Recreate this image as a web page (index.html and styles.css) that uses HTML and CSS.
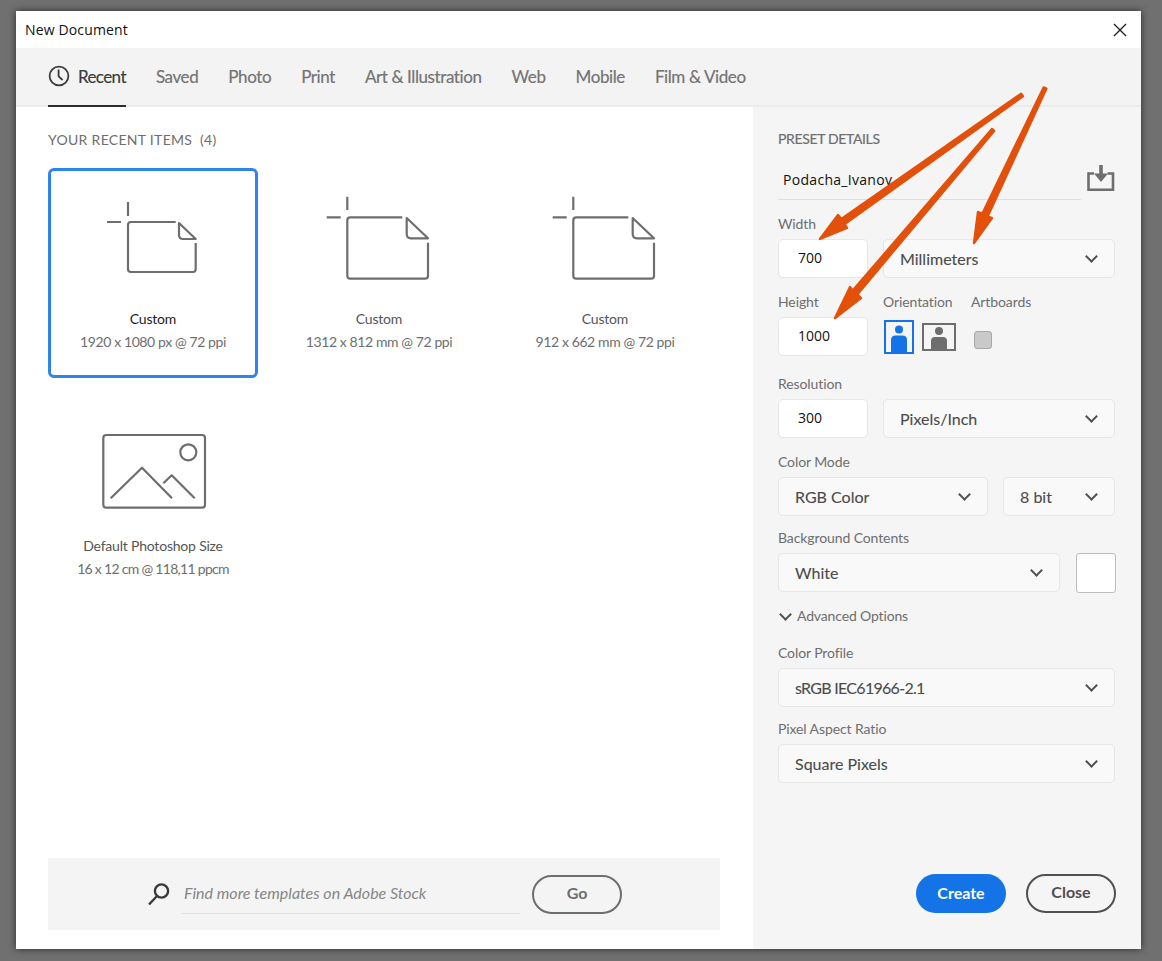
FILE: index.html
```html
<!DOCTYPE html>
<html lang="en">
<head>
	<meta charset="UTF-8">
	<title>New Document</title>
	<link rel="stylesheet" href="styles.css">
</head>
<body>
	<div class="dialog">
		<div class="title-bar">
			<span>New Document</span>
			<svg class="close-x" width="14" height="14" viewBox="0 0 14 14"><path d="M1 1L13 13M13 1L1 13"/></svg>
		</div>
		<div class="tabs">
			<a class="tab tab-active">
				<svg class="clock" width="22" height="22" viewBox="0 0 22 22"><circle cx="11" cy="11" r="9.4"/><path d="M10.6 4.6V11.4L14.6 15"/></svg>
				Recent
			</a>
			<a class="tab">Saved</a>
			<a class="tab">Photo</a>
			<a class="tab">Print</a>
			<a class="tab">Art &amp; Illustration</a>
			<a class="tab">Web</a>
			<a class="tab">Mobile</a>
			<a class="tab">Film &amp; Video</a>
		</div>
		<div class="content">
			<!-- left side -->
			<div class="recent">
				<div class="recent-title">YOUR RECENT ITEMS&nbsp; (4)</div>
				<div class="recent-grid">
					<div class="card card-selected">
						<div class="card-icon">
							<svg class="doc-icon" width="110" height="90" viewBox="0 0 110 90">
								<path d="M30 10V24M9 30H23"/>
								<path d="M77.7 30H33Q30 30 30 33V77Q30 80 33 80H95Q97.7 80 97.7 77V51"/>
								<path d="M81 31L97.7 47H85Q81 47 81 43Z"/>
							</svg>
						</div>
						<div class="card-name">Custom</div>
						<div class="card-size">1920 x 1080 px @ 72 ppi</div>
					</div>
					<div class="card">
						<div class="card-icon">
							<svg class="doc-icon" width="110" height="90" viewBox="0 0 110 90">
								<path d="M23.3 4.7V18M2.7 25.3H16.7"/>
								<path d="M78.3 25.3H26.3Q23.3 25.3 23.3 28.3V83.7Q23.3 86.7 26.3 86.7H101Q104 86.7 104 83.7V50.7"/>
								<path d="M82.7 26L104 46.3H87Q82.7 46.3 82.7 42Z"/>
							</svg>
						</div>
						<div class="card-name">Custom</div>
						<div class="card-size">1312 x 812 mm @ 72 ppi</div>
					</div>
					<div class="card">
						<div class="card-icon">
							<svg class="doc-icon" width="110" height="90" viewBox="0 0 110 90">
								<path d="M23.3 4.7V18M2.7 25.3H16.7"/>
								<path d="M78.3 25.3H26.3Q23.3 25.3 23.3 28.3V83.7Q23.3 86.7 26.3 86.7H101Q104 86.7 104 83.7V50.7"/>
								<path d="M82.7 26L104 46.3H87Q82.7 46.3 82.7 42Z"/>
							</svg>
						</div>
						<div class="card-name">Custom</div>
						<div class="card-size">912 x 662 mm @ 72 ppi</div>
					</div>
					<div class="card">
						<div class="card-icon">
							<svg class="doc-icon" width="110" height="90" viewBox="0 0 110 90">
								<rect x="5.3" y="16" width="101.7" height="72.7" rx="3"/>
								<circle cx="90.3" cy="33.3" r="8"/>
								<path d="M12.7 79.3L44 48.7L74 79.3M65.3 64.3L73.7 56.3L96.7 79.3"/>
							</svg>
						</div>
						<div class="card-name">Default Photoshop Size</div>
						<div class="card-size card-size-narrow">16 x 12 cm @ 118,11 ppcm</div>
					</div>
				</div>
				<div class="search-bar">
					<svg class="search-icon" width="24" height="24" viewBox="0 0 24 24"><circle cx="14.5" cy="9" r="6.6"/><path d="M10 14L2 22.5"/></svg>
					<div class="search-input">Find more templates on Adobe Stock</div>
					<a class="btn btn-outline btn-go">Go</a>
				</div>
			</div>
			<!-- right side -->
			<div class="details">
				<div class="details-title">PRESET DETAILS</div>
				<div class="name-row">
					<div class="name-input">Podacha_Ivanov</div>
					<svg class="save-icon" width="28" height="27" viewBox="0 0 28 27">
						<path class="save-tray" d="M7 8.5H1.5V24.8H26V8.5H20.5"/>
						<path class="save-arrow" d="M12.2 0H15.8V8.5H21L14 17L7 8.5H12.2Z"/>
					</svg>
				</div>

				<div class="field field-width">
					<label>Width</label>
					<div class="field-row">
						<div class="num-input">700</div>
						<div class="select select-grow">Millimeters<i class="chevron"></i></div>
					</div>
				</div>

				<div class="orient-grid">
					<label>Height</label>
					<label>Orientation</label>
					<label>Artboards</label>
					<div class="num-input">1000</div>
					<div class="orient-btns">
						<svg class="portrait" width="30" height="34" viewBox="0 0 30 34">
							<rect x="1" y="1" width="28" height="32"/>
							<circle cx="15" cy="9.5" r="4"/>
							<path d="M7 33V20Q7 15.5 11.5 15.5H18.5Q23 15.5 23 20V33Z"/>
						</svg>
						<svg class="landscape" width="34" height="28" viewBox="0 0 34 28">
							<rect x="1" y="1" width="32" height="26"/>
							<circle cx="17" cy="8" r="4"/>
							<path d="M9 27V18Q9 14 13 14H21Q25 14 25 18V27Z"/>
						</svg>
					</div>
					<div class="checkbox"></div>
				</div>

				<div class="field field-res">
					<label>Resolution</label>
					<div class="field-row">
						<div class="num-input">300</div>
						<div class="select select-grow">Pixels/Inch<i class="chevron"></i></div>
					</div>
				</div>

				<div class="field">
					<label>Color Mode</label>
					<div class="field-row">
						<div class="select select-grow">RGB Color<i class="chevron"></i></div>
						<div class="select select-bit">8 bit<i class="chevron"></i></div>
					</div>
				</div>

				<div class="field field-tight">
					<label>Background Contents</label>
					<div class="field-row field-row-wide">
						<div class="select select-grow">White<i class="chevron"></i></div>
						<div class="swatch"></div>
					</div>
				</div>

				<div class="advanced"><i class="chevron chevron-small"></i>Advanced Options</div>

				<div class="field field-profile">
					<label>Color Profile</label>
					<div class="select select-narrow">sRGB IEC61966-2.1<i class="chevron"></i></div>
				</div>

				<div class="field field-tight">
					<label>Pixel Aspect Ratio</label>
					<div class="select">Square Pixels<i class="chevron"></i></div>
				</div>

				<div class="actions">
					<a class="btn btn-primary">Create</a>
					<a class="btn btn-outline btn-close">Close</a>
				</div>
			</div>
		</div>
	</div>

	<!-- arrows drawn over the screenshot -->
	<svg class="arrows" width="1162" height="961" viewBox="0 0 1162 961">
		<polygon points="820,239 838,215 841.3,219 1021.1,93.8 1022.9,96.2 844.7,224 847,228"/>
		<polygon points="974,243 978,212 982.3,213.7 1043.6,87.4 1046.4,88.6 987.7,216.3 992,218"/>
		<polygon points="835,318 850,287 852.7,290.6 991.9,129 994.1,131 857.3,294.4 861,298"/>
	</svg>
</body>
</html>
```

FILE: styles.css
```css
html, body {
	margin: 0;
	padding: 0;
	height: 961px;
	overflow: hidden;
}
body {
	background-color: #707070;
	padding: 11px 21px 12px 16px;
	box-sizing: border-box;
	position: relative;
	font-family: "Lato", "Noto Sans", sans-serif;
	color: #6e6e6e;
}
a {
	text-decoration: none;
}
label {
	display: block;
	height: 20px;
	line-height: 20px;
	font-size: 14px;
	letter-spacing: -0.1px;
	color: #6e6e6e;
	margin-bottom: 5px;
}
.dialog {
	height: 938px;
	background-color: #fff;
	box-shadow: 0 0 7px #2a2a2a;
	display: flex;
	flex-direction: column;
}
.title-bar {
	height: 37px;
	display: flex;
	align-items: center;
	justify-content: space-between;
	padding: 0 14px 0 9px;
	font-family: "Open Sans", sans-serif;
	font-size: 14px;
	letter-spacing: 0.15px;
	color: #111;
}
.close-x path {
	stroke: #222;
	stroke-width: 1.4;
	fill: none;
}
.tabs {
	height: 57px;
	background-color: #f3f3f3;
	border-bottom: 2px solid #ebebeb;
	padding-left: 32px;
	display: flex;
	gap: 30px;
}
.tab {
	display: flex;
	align-items: center;
	gap: 8px;
	height: 57px;
	padding-bottom: 1px;
	box-sizing: border-box;
	font-size: 17px;
	letter-spacing: -0.4px;
	-webkit-text-stroke: 0.2px;
	color: #747474;
}
.tab-active {
	color: #3c3c3c;
	border-bottom: 2px solid #2c2c2c;
	height: 59px;
	letter-spacing: -0.6px;
}
.clock {
	fill: none;
	stroke: #3c3c3c;
	stroke-width: 1.8;
}
.content {
	flex: 1;
	display: flex;
	min-height: 0;
}

/* left side */
.recent {
	width: 737px;
	box-sizing: border-box;
	padding: 22px 33px 19px 32px;
	display: flex;
	flex-direction: column;
}
.recent-title {
	height: 22px;
	line-height: 22px;
	font-size: 14px;
	letter-spacing: 0.3px;
	color: #6e6e6e;
}
.recent-grid {
	margin-top: 17px;
	display: grid;
	grid-template-columns: repeat(3, 210px);
	grid-template-rows: 210px 210px;
	column-gap: 16px;
	row-gap: 17px;
}
.card {
	border-radius: 6px;
	box-sizing: border-box;
	text-align: center;
	border: 3px solid transparent;
}
.card-selected {
	border-color: #2d84ee;
}
.card-icon {
	height: 132px;
	display: flex;
	align-items: center;
	justify-content: center;
}
.doc-icon {
	fill: none;
	stroke: #6e6e6e;
	stroke-width: 2.2;
	stroke-linejoin: round;
}
.card-name {
	margin-top: 5px;
	height: 22px;
	line-height: 22px;
	font-size: 14px;
	letter-spacing: -0.2px;
	color: #555;
}
.card-selected .card-name {
	color: #222;
}
.card-size {
	margin-top: 1px;
	height: 22px;
	line-height: 22px;
	font-size: 14px;
	letter-spacing: -0.4px;
	color: #6e6e6e;
}
.card-size-narrow {
	letter-spacing: -0.7px;
}
.search-bar {
	margin-top: auto;
	height: 72px;
	background-color: #f4f4f4;
	display: flex;
	align-items: center;
	padding-left: 99px;
}
.search-icon {
	fill: none;
	stroke: #3a3a3a;
	stroke-width: 2.4;
}
.search-input {
	width: 338px;
	height: 39px;
	margin-left: 11px;
	padding-left: 2px;
	line-height: 36px;
	border-bottom: 1px solid #dfdfdf;
	box-sizing: border-box;
	font-size: 16px;
	font-style: italic;
	color: #868686;
}
.btn {
	display: block;
	width: 90px;
	height: 39px;
	line-height: 37px;
	box-sizing: border-box;
	border-radius: 20px;
	text-align: center;
	font-size: 16px;
	font-weight: bold;
}
.btn-outline {
	line-height: 32px;
	border: 2.5px solid #6e6e6e;
	color: #6e6e6e;
}
.btn-go {
	margin-left: 12px;
}
.btn-close {
	border-color: #505050;
	color: #505050;
}
.btn-primary {
	background-color: #1473e6;
	color: #fff;
}

/* right side */
.details {
	flex: 1;
	background-color: #f5f5f5;
	box-sizing: border-box;
	padding: 22px 26px 36px 25px;
	display: flex;
	flex-direction: column;
}
.details-title {
	height: 20px;
	line-height: 20px;
	font-size: 14px;
	letter-spacing: -0.35px;
	-webkit-text-stroke: 0.2px;
	color: #6e6e6e;
}
.name-row {
	margin-top: 11px;
	height: 39px;
	display: flex;
	justify-content: space-between;
	align-items: flex-start;
}
.name-input {
	width: 303px;
	height: 40px;
	line-height: 39px;
	padding-left: 5px;
	box-sizing: border-box;
	border-bottom: 1px solid #dedede;
	font-family: "Open Sans", sans-serif;
	font-size: 14px;
	letter-spacing: 0.3px;
	color: #111;
}
.save-icon {
	margin-top: 5px;
}
.save-tray {
	fill: none;
	stroke: #6e6e6e;
	stroke-width: 2.6;
}
.save-arrow {
	fill: #6e6e6e;
}
.field {
	margin-top: 14px;
}
.field-width {
	margin-top: 15px;
}
.field-res {
	margin-top: 18px;
}
.field-tight {
	margin-top: 12px;
}
.field-profile {
	margin-top: 17px;
}
.field-row {
	display: flex;
	gap: 15px;
}
.field-row-wide {
	gap: 16px;
}
.num-input {
	width: 90px;
	height: 39px;
	line-height: 36px;
	box-sizing: border-box;
	padding-left: 19px;
	background-color: #fff;
	border: 1px solid #e6e6e6;
	border-radius: 5px;
	font-family: "Open Sans", sans-serif;
	font-size: 14px;
	color: #111;
}
.select {
	height: 39px;
	line-height: 38px;
	box-sizing: border-box;
	padding: 0 16px;
	background-color: #f9f9f9;
	border: 1px solid #e6e6e6;
	border-radius: 5px;
	font-size: 16px;
	-webkit-text-stroke: 0.1px;
	color: #4b4b4b;
	display: flex;
	align-items: center;
	justify-content: space-between;
}
.select-grow {
	flex: 1;
}
.select-bit {
	width: 112px;
}
.select-narrow {
	letter-spacing: -0.7px;
}
.chevron {
	width: 7px;
	height: 7px;
	margin: -4px 2px 0 0;
	border-right: 2px solid #505050;
	border-bottom: 2px solid #505050;
	transform: rotate(45deg);
}
.orient-grid {
	margin-top: 14px;
	display: grid;
	grid-template-columns: 90px 73px auto;
	column-gap: 15px;
}
.orient-btns {
	display: flex;
	align-items: center;
	gap: 8px;
	margin-left: 1px;
}
.portrait rect {
	fill: none;
	stroke: #1473e6;
	stroke-width: 2;
}
.portrait circle, .portrait path {
	fill: #1473e6;
}
.landscape rect {
	fill: none;
	stroke: #6e6e6e;
	stroke-width: 2;
}
.landscape circle, .landscape path {
	fill: #6e6e6e;
}
.checkbox {
	width: 18px;
	height: 18px;
	margin: 14px 0 0 3px;
	box-sizing: border-box;
	background-color: #c9c9c9;
	border: 1px solid #a8a8a8;
	border-radius: 3px;
}
.swatch {
	width: 40px;
	height: 40px;
	margin-right: -1px;
	box-sizing: border-box;
	background-color: #fff;
	border: 1px solid #bdbdbd;
	border-radius: 3px;
}
.advanced {
	margin-top: 13px;
	height: 20px;
	line-height: 20px;
	font-size: 14px;
	letter-spacing: -0.15px;
	color: #6e6e6e;
	display: flex;
	align-items: center;
}
.chevron-small {
	margin: -4px 7px 0 3px;
}
.actions {
	margin-top: auto;
	display: flex;
	justify-content: flex-end;
	gap: 20px;
	margin-right: -1px;
}
.arrows {
	position: absolute;
	left: 0;
	top: 0;
	pointer-events: none;
	filter: blur(0.4px);
}
.arrows polygon {
	fill: #e2500a;
	stroke: #e2500a;
	stroke-width: 2.4;
	stroke-linejoin: round;
}
```
